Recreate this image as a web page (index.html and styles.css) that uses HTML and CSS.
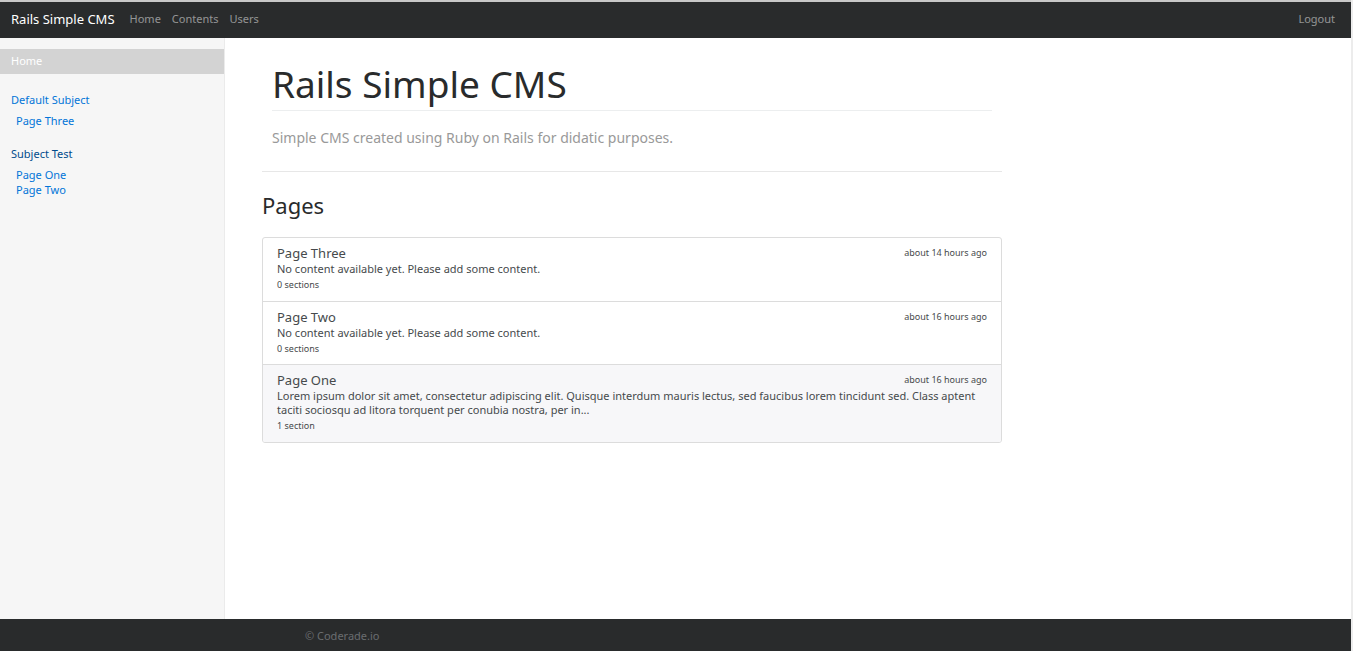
FILE: index.html
```html
<!DOCTYPE html>
<html>
<head>
<meta charset="utf-8">
<link rel="stylesheet" href="styles.css">
</head>
<body>
<div class="page">
  <nav class="navbar">
    <a class="brand" href="#">Rails Simple CMS</a>
    <ul class="nav">
      <li><a href="#">Home</a></li>
      <li><a href="#">Contents</a></li>
      <li><a href="#">Users</a></li>
    </ul>
    <a class="logout" href="#">Logout</a>
  </nav>
  <div class="middle">
    <aside class="sidebar">
      <a class="side-active" href="#">Home</a>
      <div class="subject">
        <a class="subject-title" href="#">Default Subject</a>
        <a class="side-page" href="#">Page Three</a>
      </div>
      <div class="subject">
        <a class="subject-title dark" href="#">Subject Test</a>
        <a class="side-page" href="#">Page One</a>
        <a class="side-page" href="#">Page Two</a>
      </div>
    </aside>
    <main class="main">
      <div class="content">
        <div class="jumbo">
          <h1 class="title">Rails Simple CMS</h1>
          <p class="lead">Simple CMS created using Ruby on Rails for didatic purposes.</p>
        </div>
        <hr class="sep">
        <h3 class="pages-title">Pages</h3>
        <div class="list-group">
          <a class="item" href="#">
            <div class="item-head"><span class="item-title">Page Three</span><small class="item-time">about 14 hours ago</small></div>
            <p class="item-text">No content available yet. Please add some content.</p>
            <small class="item-sections">0 sections</small>
          </a>
          <a class="item" href="#">
            <div class="item-head"><span class="item-title">Page Two</span><small class="item-time">about 16 hours ago</small></div>
            <p class="item-text">No content available yet. Please add some content.</p>
            <small class="item-sections">0 sections</small>
          </a>
          <a class="item item-hover" href="#">
            <div class="item-head"><span class="item-title">Page One</span><small class="item-time">about 16 hours ago</small></div>
            <p class="item-text">Lorem ipsum dolor sit amet, consectetur adipiscing elit. Quisque interdum mauris lectus, sed faucibus lorem tincidunt sed. Class aptent taciti sociosqu ad litora torquent per conubia nostra, per in...</p>
            <small class="item-sections">1 section</small>
          </a>
        </div>
      </div>
    </main>
  </div>
  <footer class="footer">
    <span class="copy">© Coderade.io</span>
  </footer>
</div>
</body>
</html>
```

FILE: styles.css
```css
* { box-sizing: border-box; }
html, body { margin: 0; padding: 0; }
body {
  font-family: "Noto Sans", "Open Sans", sans-serif;
  background: #ececec;
  color: #292b2c;
}
a { text-decoration: none; }
.page {
  width: 1351px;
  height: 651px;
  border-top: 2px solid #c8c8c8;
  display: flex;
  flex-direction: column;
  background: #fff;
}
.navbar {
  height: 36px;
  flex: none;
  background: #292b2c;
  display: flex;
  align-items: center;
  padding: 0 16px 2px 11px;
}
.brand {
  color: #fff;
  font-size: 13px;
  margin-right: 15px;
  line-height: 18px;
}
.nav {
  list-style: none;
  margin: 0;
  padding: 0;
  display: flex;
  gap: 11px;
}
.nav a, .logout {
  color: rgba(255,255,255,0.5);
  font-size: 11px;
  line-height: 15px;
  display: block;
  padding-bottom: 1px;
}
.logout { margin-left: auto; }
.middle {
  flex: 1;
  display: flex;
  min-height: 0;
}
.sidebar {
  width: 225px;
  flex: none;
  background: #f6f6f6;
  border-right: 1px solid #ebebeb;
  padding-top: 11px;
}
.side-active {
  display: block;
  height: 25px;
  line-height: 24px;
  background: #d3d3d3;
  color: #fff;
  font-size: 11px;
  padding-left: 11px;
}
.subject {
  display: flex;
  flex-direction: column;
  padding: 0 11px;
  margin-top: 18px;
}
.subject + .subject { margin-top: 18px; }
.subject-title {
  color: #0275d8;
  font-size: 11px;
  line-height: 15px;
  margin-bottom: 6px;
}
.subject-title.dark { color: #014c8c; }
.side-page {
  color: #0275d8;
  font-size: 11px;
  line-height: 15px;
  padding-left: 5px;
}
.main {
  flex: 1;
  padding: 0 37px;
}
.content { width: 740px; }
.jumbo { padding: 22px 10px 0 10px; }
.title {
  font-weight: 400;
  font-size: 37px;
  line-height: 48px;
  margin: 0;
  padding-bottom: 2px;
  border-bottom: 1px solid #eceeef;
}
.lead {
  font-size: 14px;
  color: #999;
  margin: 17px 0 0;
  line-height: 20px;
}
.sep {
  border: 0;
  border-top: 1px solid #e7e7e7;
  margin: 23px 0 0;
}
.pages-title {
  font-weight: 400;
  font-size: 22px;
  line-height: 26px;
  margin: 20px 0 0;
}
.list-group {
  margin-top: 19px;
  border: 1px solid #dcdcdc;
  border-radius: 3px;
  overflow: hidden;
}
.item {
  display: block;
  padding: 7px 14px 7.5px 14px;
  color: #464a4c;
}
.item + .item { border-top: 1px solid #dcdcdc; }
.item-hover { background: #f7f7f9; }
.item-head {
  display: flex;
  justify-content: space-between;
  align-items: flex-start;
}
.item-title {
  font-size: 13px;
  line-height: 17px;
}
.item-time {
  font-size: 9px;
  line-height: 15px;
  color: #464a4c;
}
.item-text {
  margin: 0;
  font-size: 11px;
  line-height: 14px;
  color: #464a4c;
}
.item-sections {
  display: block;
  font-size: 9px;
  line-height: 17px;
  color: #464a4c;
}
.footer {
  height: 32px;
  flex: none;
  background: #292b2c;
  display: flex;
  align-items: center;
  padding-left: 305px;
}
.copy {
  color: #6a6d70;
  font-size: 11px;
}
```
